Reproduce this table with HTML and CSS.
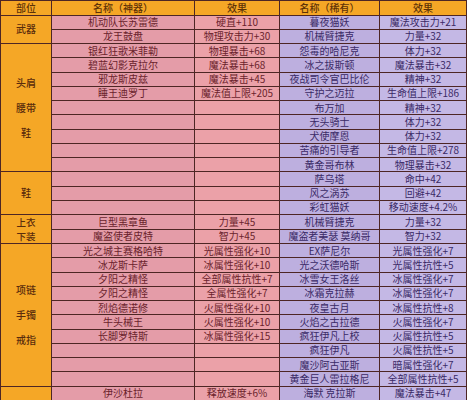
FILE: index.html
```html
<!DOCTYPE html>
<html lang="zh">
<head>
<meta charset="utf-8">
<link rel="stylesheet" href="styles.css">
</head>
<body>
<table class="gear">
<colgroup>
<col class="c-part"><col class="c-aname"><col class="c-aeff"><col class="c-rname"><col class="c-reff">
</colgroup>
<thead>
<tr><th>部位</th><th>名称（神器）</th><th>效果</th><th>名称（稀有）</th><th>效果</th></tr>
</thead>
<tbody>
<tr><td class="part" rowspan="2">武器</td><td class="an">机动队长苏雷德</td><td class="ae">硬直+110</td><td class="rn">暮夜猫妖</td><td class="re">魔法攻击力+21</td></tr>
<tr><td class="an">龙王鼓盘</td><td class="ae">物理攻击力+30</td><td class="rn">机械臂捷克</td><td class="re">力量+32</td></tr>
<tr><td class="part" rowspan="9"><div class="labels"><span>头肩</span><span>腰带</span><span>鞋</span></div></td><td class="an">银红狂歌米菲勒</td><td class="ae">物理暴击+68</td><td class="rn">怨毒的哈尼克</td><td class="re">体力+32</td></tr>
<tr><td class="an">碧蓝幻影克拉尔</td><td class="ae">魔法暴击+68</td><td class="rn">冰之拔斯顿</td><td class="re">魔法暴击+32</td></tr>
<tr><td class="an">邪龙斯皮兹</td><td class="ae">魔法暴击+45</td><td class="rn">夜战司令官巴比伦</td><td class="re">精神+32</td></tr>
<tr><td class="an">睡王迪罗丁</td><td class="ae">魔法值上限+205</td><td class="rn">守护之迈拉</td><td class="re">生命值上限+186</td></tr>
<tr><td class="an"></td><td class="ae"></td><td class="rn">布万加</td><td class="re">精神+32</td></tr>
<tr><td class="an"></td><td class="ae"></td><td class="rn">无头骑士</td><td class="re">体力+32</td></tr>
<tr><td class="an"></td><td class="ae"></td><td class="rn">犬使摩恩</td><td class="re">体力+32</td></tr>
<tr><td class="an"></td><td class="ae"></td><td class="rn">苦痛的引导者</td><td class="re">生命值上限+278</td></tr>
<tr><td class="an"></td><td class="ae"></td><td class="rn">黄金哥布林</td><td class="re">物理暴击+32</td></tr>
<tr><td class="part" rowspan="3">鞋</td><td class="an"></td><td class="ae"></td><td class="rn">萨乌塔</td><td class="re">命中+42</td></tr>
<tr><td class="an"></td><td class="ae"></td><td class="rn">风之涡苏</td><td class="re">回避+42</td></tr>
<tr><td class="an"></td><td class="ae"></td><td class="rn">彩虹猫妖</td><td class="re">移动速度+4.2%</td></tr>
<tr><td class="part" rowspan="2"><div class="labels tight"><span>上衣</span><span>下装</span></div></td><td class="an">巨型黑章鱼</td><td class="ae">力量+45</td><td class="rn">机械臂捷克</td><td class="re">力量+32</td></tr>
<tr><td class="an">魔盗使者皮特</td><td class="ae">智力+45</td><td class="rn">魔盗者美瑟 莫纳哥</td><td class="re">智力+32</td></tr>
<tr><td class="part" rowspan="10"><div class="labels"><span>项链</span><span>手镯</span><span>戒指</span></div></td><td class="an">光之城主赛格哈特</td><td class="ae">光属性强化+10</td><td class="rn">EX萨尼尔</td><td class="re">光属性强化+7</td></tr>
<tr><td class="an">冰龙斯卡萨</td><td class="ae">冰属性强化+10</td><td class="rn">光之沃德哈斯</td><td class="re">光属性抗性+5</td></tr>
<tr><td class="an">夕阳之精怪</td><td class="ae">全部属性抗性+7</td><td class="rn">冰雪女王洛丝</td><td class="re">冰属性强化+7</td></tr>
<tr><td class="an">夕阳之精怪</td><td class="ae">全属性强化+7</td><td class="rn">冰霜克拉赫</td><td class="re">冰属性强化+7</td></tr>
<tr><td class="an">烈焰德诺修</td><td class="ae">火属性强化+10</td><td class="rn">夜皇古月</td><td class="re">冰属性抗性+8</td></tr>
<tr><td class="an">牛头械王</td><td class="ae">火属性强化+10</td><td class="rn">火焰之古拉德</td><td class="re">火属性强化+7</td></tr>
<tr><td class="an">长脚罗特斯</td><td class="ae">冰属性强化+15</td><td class="rn">疯狂伊凡上校</td><td class="re">火属性抗性+5</td></tr>
<tr><td class="an"></td><td class="ae"></td><td class="rn">疯狂伊凡</td><td class="re">火属性抗性+5</td></tr>
<tr><td class="an"></td><td class="ae"></td><td class="rn">魔沙阿古亚斯</td><td class="re">暗属性强化+7</td></tr>
<tr><td class="an"></td><td class="ae"></td><td class="rn">黄金巨人雷拉格尼</td><td class="re">全部属性抗性+5</td></tr>
<tr><td class="part"></td><td class="an">伊沙杜拉</td><td class="ae">释放速度+6%</td><td class="rn">海默 克拉斯</td><td class="re">魔法暴击+47</td></tr>
</tbody>
</table>
</body>
</html>
```

FILE: styles.css
```css
html, body {
  margin: 0;
  padding: 0;
  background: #f4eef0;
}
body {
  font-family: "Noto Sans CJK SC", "Noto Sans", sans-serif;
  font-size: 10px;
  overflow: hidden;
}
.gear {
  border-collapse: collapse;
  table-layout: fixed;
  width: 466px;
}
.c-part { width: 51px; }
.c-aname { width: 143px; }
.c-aeff { width: 85px; }
.c-rname { width: 100px; }
.c-reff { width: 87px; }

.gear th, .gear td {
  border: 1px solid #4d2624;
  padding: 0;
  text-align: center;
  white-space: nowrap;
  overflow: hidden;
  line-height: 12px;
}
.gear thead tr { height: 14.5px; }
.gear tbody tr { height: 14.25px; }
.gear th {
  background: #f5a726;
  color: #5e3206;
  font-weight: 500;
}
.part {
  background: #f5a726;
  color: #5a2c0c;
  font-weight: 500;
}
.labels {
  display: flex;
  flex-direction: column;
  align-items: center;
  line-height: 25px;
}
.labels.tight {
  line-height: 14px;
  font-size: 9.5px;
}
.an {
  background: #e49ca8;
  color: #6a1f2c;
}
.ae {
  background: #eba1a8;
  color: #6a1f2c;
}
.rn {
  background: #bdafdf;
  color: #3a2a66;
}
.re {
  background: #c4b8e5;
  color: #3a2a66;
}
```
